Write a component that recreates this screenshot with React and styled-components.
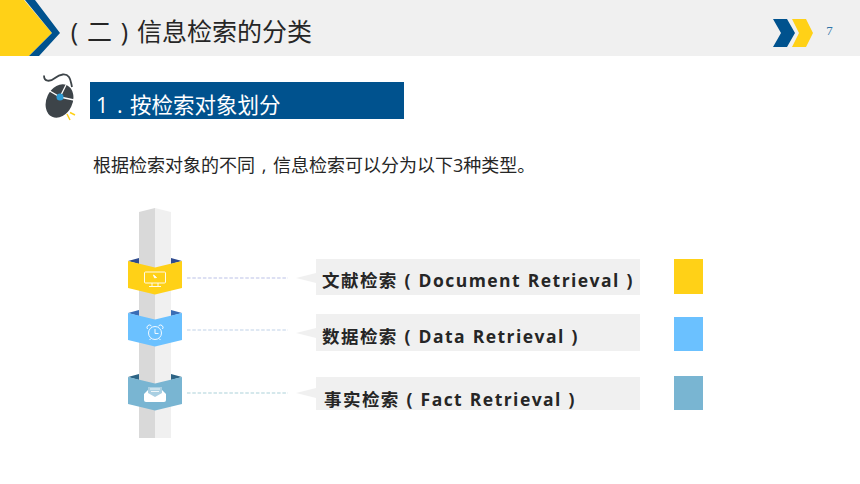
import React from 'react';
import styled, { createGlobalStyle } from 'styled-components';

const GlobalStyle = createGlobalStyle`
    html, body {
        margin: 0;
        padding: 0;
        background: #ffffff;
    }
    body {
        font-family: "Open Sans", "Noto Sans CJK SC", sans-serif;
    }
`;

const Page = styled.div`
    width: 860px;
    height: 484px;
    overflow: hidden;
    background: #ffffff;
`;

const Header = styled.header`
    height: 56px;
    display: flex;
    align-items: center;
    background: #f0f0f0;
`;

const HeaderTitle = styled.h1`
    flex: 1;
    margin: 6px 0 0 0;
    font-size: 25px;
    font-weight: 400;
    line-height: 50px;
    color: #262626;
    white-space: nowrap;
`;

const Centered = styled.span`
    display: inline-block;
    width: 1em;
    text-align: center;
`;

const PageNumber = styled.span`
    width: 21px;
    margin: 6px 20px 0 0;
    text-align: center;
    font-family: "Liberation Serif", serif;
    font-size: 13px;
    color: #2f74a8;
`;

const SectionRow = styled.section`
    display: flex;
    align-items: flex-start;
    height: 63px;
    padding: 17px 0 0 42px;
`;

const SectionTitle = styled.h2`
    width: 308px;
    height: 37px;
    margin: 9px 0 0 12px;
    padding-left: 6px;
    background: #00528e;
    color: #ffffff;
    font-size: 21.5px;
    font-weight: 400;
    line-height: 46px;
    overflow: hidden;
    white-space: nowrap;
`;

const Marker = styled.span`
    display: inline-block;
    width: 34px;
    word-spacing: 3px;
`;

const Intro = styled.p`
    margin: 17px 0 0 93px;
    font-size: 18px;
    line-height: 24px;
    color: #262626;
    white-space: nowrap;
`;

const Diagram = styled.div`
    position: relative;
    margin-top: 31px;
    height: 230px;
    padding: 50px 0 0 128px;
    box-sizing: border-box;
`;

const Pillar = styled.svg`
    position: absolute;
    left: 139px;
    top: 0;
`;

const Row = styled.div`
    position: relative;
    display: flex;
    align-items: flex-start;
    height: ${(p) => p.$height}px;
`;

const Ribbon = styled.svg`
    flex: none;
`;

const Connector = styled.svg`
    flex: none;
    margin: 0 0 0 5px;
`;

const Label = styled.div`
    flex: none;
    box-sizing: border-box;
    width: 324px;
    height: ${(p) => p.$height}px;
    margin-top: ${(p) => p.$offset}px;
    padding-left: ${(p) => p.$indent}px;
    background: #f0f0f0;
    color: #262626;
    font-size: 17.5px;
    font-weight: 700;
    letter-spacing: 1.45px;
    word-spacing: 0.7px;
    line-height: ${(p) => p.$line}px;
    overflow: hidden;
    white-space: nowrap;
`;

const Swatch = styled.div`
    flex: none;
    width: 29px;
    height: ${(p) => p.$height}px;
    margin: ${(p) => p.$offset}px 0 0 34px;
    background: ${(p) => p.$color};
`;

const Chevrons = () => (
    <svg width="49" height="56" viewBox="770 0 49 56" style={{ flex: 'none' }}>
        <path d="M773 19 H787 L795 33 L787 47 H773 L781 33 Z" fill="#00528e" />
        <path d="M792 19 H806 L813 33 L806 47 H792 L799 33 Z" fill="#ffd117" />
    </svg>
);

const HeaderArrow = () => (
    <svg width="62" height="56" viewBox="0 0 62 56" style={{ flex: 'none' }}>
        <path d="M0 0 H24 L52 33 L29 56 H0 Z" fill="#ffd117" />
        <path d="M25 0 H35 L60 33 L39 56 H29 L52 33 Z" fill="#00528e" />
    </svg>
);

const MouseIcon = () => (
    <svg width="36" height="50" viewBox="0 0 36 50" style={{ flex: 'none' }}>
        <path d="M2 2.500 C2 9 8 9 13 5 C18 1 24 0 27 4 C29 7 29 10 30 14" fill="none" stroke="#3d4449" strokeWidth="1.800" />
        <ellipse cx="17.500" cy="28" rx="13" ry="17.500" transform="rotate(25 17.500 28)" fill="#3d4449" />
        <path d="M6 17 L18 24 L24 12 M18 24 L32 27" fill="none" stroke="#ffffff" strokeWidth="1.300" />
        <circle cx="18" cy="24" r="3.500" fill="#2d9bd4" />
        <path d="M28 39.500 L33 42 M25 41 L28 47" stroke="#ffd117" strokeWidth="1.500" />
    </svg>
);

const PillarShape = () => (
    <Pillar width="32" height="230" viewBox="0 0 32 230">
        <path d="M0 4 L16 0 V230 H0 Z" fill="#d9d9d9" />
        <path d="M16 0 L32 4 V230 H16 Z" fill="#f0f0f0" />
    </Pillar>
);

const RibbonShape = ({ color, dark, children }) => (
    <Ribbon width="54" height="37" viewBox="0 0 54 37">
        <path d="M0 3 L11 0 V6 Z M54 3 L43 0 V6 Z" fill={dark} />
        <path d="M0 3 L27 9.500 L54 3 V30 L27 36.500 L0 30 Z" fill={color} />
        {children}
    </Ribbon>
);

const MonitorGlyph = () => (
    <g fill="none" stroke="#ffffff" strokeWidth="0.9">
        <rect x="16.500" y="14" width="21" height="11" rx="1" />
        <path d="M24 25 V28 M30 25 V28 M21 28.500 H33" />
        <path d="M25.500 17 L28.500 19.500 L26.500 19.800 Z" fill="#ffffff" />
    </g>
);

const ClockGlyph = () => (
    <g fill="none" stroke="#ffffff" strokeWidth="0.9">
        <circle cx="27" cy="23" r="6.500" />
        <path d="M27 19 V23.500 H30.500" />
        <path d="M19.500 19 A2.500 2.500 0 0 1 23.500 16 M34.500 19 A2.500 2.500 0 0 0 30.500 16" />
        <path d="M23 28.500 L21.500 30 M31 28.500 L32.500 30" />
    </g>
);

const MailGlyph = () => (
    <g>
        <path d="M16 20 L20 16 H34 L38 20 V26 Q38 28 36 28 H18 Q16 28 16 26 Z" fill="#ffffff" />
        <path d="M20 13 H34 V19 L27 23 L20 19 Z" fill="#a9cfe2" />
        <path d="M22 15 H32 M23 17.500 H31" stroke="#ffffff" strokeWidth="0.8" />
    </g>
);

const DashLine = ({ color, dashY, arrowY }) => (
    <Connector width="129" height="40" viewBox="0 0 129 40">
        <line x1="0" y1={dashY} x2="101" y2={dashY} stroke={color} strokeWidth="2" strokeDasharray="3.500 1.800" />
        <path d={`M109 ${arrowY} L129 ${arrowY - 5} V${arrowY + 5} Z`} fill="#f0f0f0" />
    </Connector>
);

const rows = [
    {
        head: '文献检索',
        latin: 'Document Retrieval',
        color: '#ffd117',
        dark: '#2f4b8f',
        dash: '#dde0f3',
        glyph: <MonitorGlyph />,
        height: 52,
        dashY: 20,
        arrowY: 20,
        labelOffset: 1,
        labelHeight: 36,
        labelLine: 43,
        indent: 6,
        swatchOffset: 1,
        swatchHeight: 35,
    },
    {
        head: '数据检索',
        latin: 'Data Retrieval',
        color: '#6bc1ff',
        dark: '#3a6db5',
        dash: '#dfe8f3',
        glyph: <ClockGlyph />,
        height: 64,
        dashY: 20,
        arrowY: 23,
        labelOffset: 4,
        labelHeight: 37,
        labelLine: 45,
        indent: 6,
        swatchOffset: 7,
        swatchHeight: 34,
    },
    {
        head: '事实检索',
        latin: 'Fact Retrieval',
        color: '#79b5d2',
        dark: '#2d6485',
        dash: '#d5e8ec',
        glyph: <MailGlyph />,
        height: 40,
        dashY: 19,
        arrowY: 19,
        labelOffset: 3,
        labelHeight: 33,
        labelLine: 45,
        indent: 8,
        swatchOffset: 2,
        swatchHeight: 34,
    },
];

const App = () => {
    return (
        <Page>
            <GlobalStyle />
            <Header>
                <HeaderArrow />
                <HeaderTitle>
                    <Centered>(</Centered>
                    <Centered>二</Centered>
                    <Centered>)</Centered>
                    信息检索的分类
                </HeaderTitle>
                <Chevrons />
                <PageNumber>7</PageNumber>
            </Header>
            <SectionRow>
                <MouseIcon />
                <SectionTitle>
                    <Marker>1 .</Marker>
                    按检索对象划分
                </SectionTitle>
            </SectionRow>
            <Intro>
                根据检索对象的不同<Centered>,</Centered>信息检索可以分为以下3种类型。
            </Intro>
            <Diagram>
                <PillarShape />
                {rows.map((row) => (
                    <Row key={row.head} $height={row.height}>
                        <RibbonShape color={row.color} dark={row.dark}>
                            {row.glyph}
                        </RibbonShape>
                        <DashLine color={row.dash} dashY={row.dashY} arrowY={row.arrowY} />
                        <Label
                            $height={row.labelHeight}
                            $offset={row.labelOffset}
                            $line={row.labelLine}
                            $indent={row.indent}
                        >
                            {row.head} ( {row.latin} )
                        </Label>
                        <Swatch $color={row.color} $height={row.swatchHeight} $offset={row.swatchOffset} />
                    </Row>
                ))}
            </Diagram>
        </Page>
    );
};

export default App;
